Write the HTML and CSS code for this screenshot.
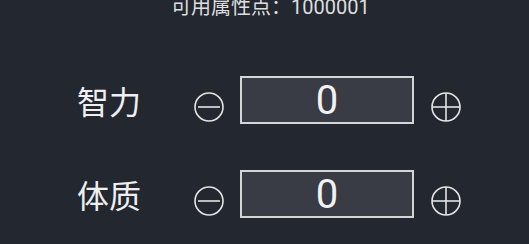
FILE: index.html
```html
<!DOCTYPE html>
<html lang="zh">
<head>
<meta charset="utf-8">
<link rel="stylesheet" href="styles.css">
</head>
<body>
<div class="page">
  <div class="header">可用属性点：1000001</div>
  <div class="rows">
    <div class="row">
      <div class="label">智力</div>
      <svg class="btn minus" viewBox="0 0 30 30" width="30" height="30"><circle cx="15" cy="15" r="14" /><line x1="4" y1="15" x2="26" y2="15" /></svg>
      <div class="value">0</div>
      <svg class="btn plus" viewBox="0 0 30 30" width="30" height="30"><circle cx="15" cy="15" r="14" /><line x1="1" y1="15" x2="29" y2="15" /><line x1="15" y1="1" x2="15" y2="29" /></svg>
    </div>
    <div class="row">
      <div class="label">体质</div>
      <svg class="btn minus" viewBox="0 0 30 30" width="30" height="30"><circle cx="15" cy="15" r="14" /><line x1="4" y1="15" x2="26" y2="15" /></svg>
      <div class="value">0</div>
      <svg class="btn plus" viewBox="0 0 30 30" width="30" height="30"><circle cx="15" cy="15" r="14" /><line x1="1" y1="15" x2="29" y2="15" /><line x1="15" y1="1" x2="15" y2="29" /></svg>
    </div>
  </div>
</div>
</body>
</html>
```
FILE: styles.css
```css
html, body {
  margin: 0;
  padding: 0;
  background: #222730;
}
.page {
  width: 529px;
  height: 244px;
  overflow: hidden;
  background: #222730;
  color: #ececec;
  font-family: Roboto, "Noto Sans CJK SC", sans-serif;
}
.header {
  height: 14px;
  line-height: 14px;
  font-size: 20px;
  padding-left: 171px;
  color: #dedede;
  white-space: nowrap;
}
.rows {
  margin-top: 62px;
  display: flex;
  flex-direction: column;
  gap: 46px;
}
.row {
  display: flex;
  align-items: center;
  height: 48px;
  padding-left: 77px;
}
.label {
  width: 64px;
  font-family: "Noto Sans CJK SC", sans-serif;
  font-size: 32px;
  line-height: 32px;
  color: #efefef;
}
.btn {
  flex: none;
  margin-top: 14px;
  fill: none;
  stroke: #e4e4e4;
  stroke-width: 1.6;
}
.minus {
  margin-left: 53px;
}
.plus {
  margin-left: 17px;
}
.value {
  box-sizing: border-box;
  width: 174px;
  height: 48px;
  margin-left: 16px;
  border: 2px solid #d4d5d7;
  background: #393c44;
  padding-top: 2px;
  font-family: Roboto, sans-serif;
  font-size: 40px;
  line-height: 42px;
  text-align: center;
  color: #f2f2f2;
}
```
